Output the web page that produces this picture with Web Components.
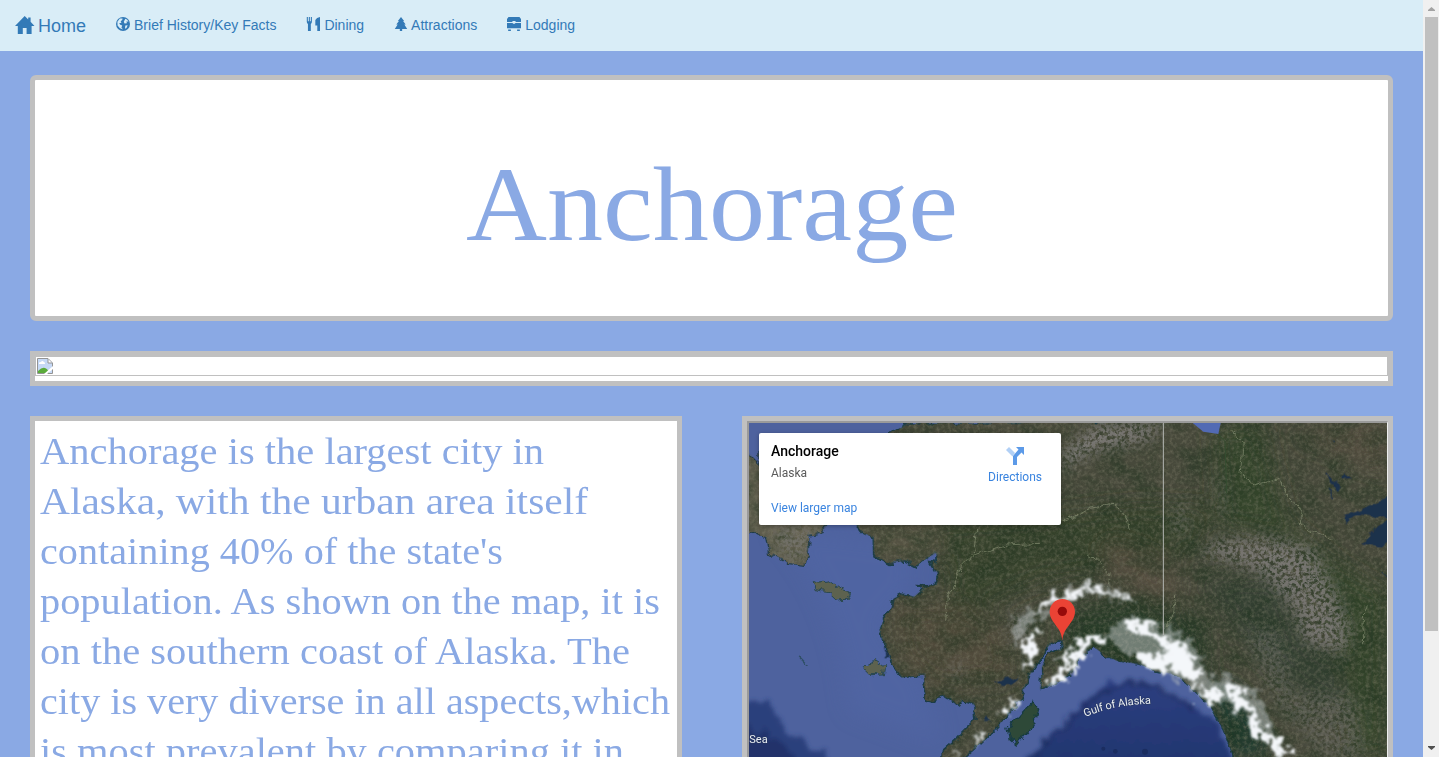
<!DOCTYPE html>
<html lang="en">
<head>
<meta charset="utf-8">
<title>Anchorage</title>
<style>
html,body{height:100%;margin:0;overflow:hidden}
body{font-family:"Liberation Sans",Arial,sans-serif;font-size:14px;background:#8aa9e4}
</style>
</head>
<body>
<city-page></city-page>

<template id="t-page">
<style>
:host{display:flex;height:757px;overflow:hidden}
main{flex:1;min-width:0;display:flex;flex-direction:column}
.content{padding:24px 30px 0;display:flex;flex-direction:column;gap:30px}
.cols{display:grid;grid-template-columns:652px 651px;gap:60px}
</style>
<main>
<site-nav>
<nav-link icon="home" brand>Home</nav-link>
<nav-link icon="globe">Brief History/Key Facts</nav-link>
<nav-link icon="cutlery">Dining</nav-link>
<nav-link icon="tree">Attractions</nav-link>
<nav-link icon="bed">Lodging</nav-link>
</site-nav>
<div class="content">
<hero-title><fit-line width="492">Anchorage</fit-line></hero-title>
<image-strip></image-strip>
<div class="cols">
<city-text>
<fit-line width="504">Anchorage is the largest city in</fit-line>
<fit-line width="548">Alaska, with the urban area itself</fit-line>
<fit-line width="463">containing 40% of the state's</fit-line>
<fit-line width="620">population. As shown on the map, it is</fit-line>
<fit-line width="590">on the southern coast of Alaska. The</fit-line>
<fit-line width="630">city is very diverse in all aspects,which</fit-line>
<fit-line width="584">is most prevalent by comparing it in</fit-line>
</city-text>
<city-map></city-map>
</div>
</div>
</main>
<page-scrollbar></page-scrollbar>
</template>

<template id="t-map">
<style>
:host{display:block;box-sizing:border-box;height:450px;border:5px solid #c0c0c0}
.frame{position:relative;height:440px;box-sizing:border-box;border:solid;border-width:2px 1px 2px 2px;border-color:#9a9a9a #eee #eee #9a9a9a;overflow:hidden;font-family:Roboto,sans-serif}
.terrain{display:block;width:638px;height:334px}
.card{position:absolute;left:10px;top:10px;width:302px;height:92px;box-sizing:border-box;background:#fff;border-radius:2px;box-shadow:0 1px 4px rgba(0,0,0,.3);padding:10px 19px 0 12px;display:flex;justify-content:space-between;font-size:12px}
.name{font-size:14px;font-weight:500;line-height:16px;color:#000}
.state{line-height:14px;margin-top:7px;color:#5b5b5b}
.more{line-height:14px;margin-top:21px;color:#3a84df}
.dir{padding-top:4px;display:flex;flex-direction:column;align-items:center;color:#3a84df;line-height:14px;gap:5px}
.dir svg{display:block}
</style>
<div class="frame">
<svg class="terrain" viewBox="27 39 1914 1002" preserveAspectRatio="none">
<defs>
<filter id="rough" x="-5%" y="-5%" width="110%" height="110%"><feTurbulence type="fractalNoise" baseFrequency=".035" numOctaves="4" seed="3"/><feDisplacementMap in="SourceGraphic" scale="26" xChannelSelector="R" yChannelSelector="G"/></filter>
<filter id="snowy" x="-20%" y="-20%" width="140%" height="140%"><feTurbulence type="fractalNoise" baseFrequency=".04" numOctaves="5" seed="11"/><feDisplacementMap in="SourceGraphic" scale="75" xChannelSelector="R" yChannelSelector="G"/><feGaussianBlur stdDeviation="2.6"/></filter>
<filter id="soft" x="-50%" y="-50%" width="200%" height="200%"><feGaussianBlur stdDeviation="32"/></filter>
<filter id="edge"><feTurbulence type="fractalNoise" baseFrequency=".03" numOctaves="4" seed="6"/><feDisplacementMap in="SourceGraphic" scale="50" xChannelSelector="R" yChannelSelector="G"/><feGaussianBlur stdDeviation="6"/></filter>
<filter id="grain" x="0" y="0" width="100%" height="100%" color-interpolation-filters="sRGB"><feTurbulence type="fractalNoise" baseFrequency=".09" numOctaves="4" seed="8" result="n"/><feColorMatrix in="n" values="0 0 0 0 .52  0 0 0 0 .51  0 0 0 0 .43  1.5 0 0 0 -.6"/><feComposite in2="SourceAlpha" operator="in"/></filter>
<filter id="shade" x="0" y="0" width="100%" height="100%" color-interpolation-filters="sRGB"><feTurbulence type="fractalNoise" baseFrequency=".012 .018" numOctaves="6" seed="21" result="n"/><feColorMatrix in="n" values="0 0 0 0 .12  0 0 0 0 .2  0 0 0 0 .12  0 2 0 0 -.75"/><feComposite in2="SourceAlpha" operator="in"/></filter>
<filter id="rock" x="-20%" y="-20%" width="140%" height="140%" color-interpolation-filters="sRGB"><feGaussianBlur in="SourceGraphic" stdDeviation="22" result="m"/><feTurbulence type="fractalNoise" baseFrequency=".09" numOctaves="4" seed="5" result="n"/><feColorMatrix in="n" values="0 0 0 0 .5  0 0 0 0 .49  0 0 0 0 .48  4 0 0 0 -1.4"/><feComposite in2="m" operator="in"/></filter>
<linearGradient id="deep" x1="0" y1="0" x2="0" y2="1"><stop offset="0" stop-color="#2c3e80"/><stop offset="1" stop-color="#21356e"/></linearGradient>
<path id="main" d="M505 39L450 72L330 150L280 250L345 340L372 371L400 383L401 432L450 460L500 452L530 468L545 455L588 430L592 458L570 455L592 490L585 525L533 524L550 535L520 560L485 552L460 565L453 595L430 630L418 665L430 695L455 755L487 803L550 795L560 870L580 876L607 853L660 888L667 868L700 880L705 930L650 985L610 1020L608 1060L675 1041L735 988L798 922L843 867L863 805L905 742L932 702L968 690L970 712L920 735L905 770L898 838L930 828L1000 790L1018 735L1060 710L1095 735L1130 752L1195 762L1248 780L1310 795L1360 835L1410 888L1450 960L1488 1060L1960 1060V20Z"/>
<clipPath id="landclip"><use href="#main"/><path d="M27 125L57 165V120H200L262 345L245 370L207 375L205 425L195 466L145 460L85 430L78 380L27 365Z"/></clipPath>
</defs>
<rect x="27" y="39" width="1914" height="1002" fill="#4e629e"/>
<path d="M100 350Q300 560 330 900L600 1000L550 800L420 650L520 540V400Z" fill="#5166a5" opacity=".6" filter="url(#soft)"/>
<g filter="url(#edge)">
<path d="M0 870L95 885L135 965L220 1015L310 1070H0Z" fill="#2b3f7c"/>
<path d="M0 950L100 975L190 1070H0Z" fill="#20326a"/>
<path d="M840 1070L960 955L1050 862L1110 815L1230 820L1310 865L1420 925L1500 1080Z" fill="url(#deep)"/>
<path d="M870 1050L970 950L1080 850L1170 820L1250 830L1360 895" fill="none" stroke="#1b2a5c" stroke-width="13" opacity=".65"/>
</g>
<g filter="url(#rough)">
<path d="M17 125L57 165V120H200L262 345L245 370L207 375L205 425L195 466L145 460L85 430L78 380L17 365Z" fill="#625e50" stroke="#233e4b" stroke-width="4"/>
<use href="#main" fill="#47493a" stroke="#1d3c46" stroke-width="5"/>
<path d="M220 514L235 520L270 515L302 538L326 545L320 568L291 570L268 548L225 542Z M370 770L406 752L434 770L430 795L397 797Z" fill="#5d624f" stroke="#29474f" stroke-width="3"/>
<path d="M801 955L838 920L880 875L893 895L884 940L832 1005L808 985Z" fill="#2d4a37" stroke="#183a42" stroke-width="4"/>
<path d="M178 737L195 755L205 765" stroke="#304f68" stroke-width="5" fill="none"/>
</g>
<g clip-path="url(#landclip)">
<g filter="url(#soft)">
<path d="M600 340L960 310L1200 280L1420 290L1380 420L1130 470L900 510L640 630Z" fill="#334229" opacity=".75"/>
<path d="M1420 60L1560 30L1640 330L1790 460L1940 550V1041H1850L1790 620L1680 400L1440 340Z" fill="#33452b" opacity=".85"/>
<path d="M450 590L640 580L780 640L820 800L600 840L490 760Z" fill="#554c3b" opacity=".7"/>
<path d="M1370 500L1620 500L1690 680L1800 740L1830 900L1680 850L1500 680Z" fill="#323e32" opacity=".85"/>
<path d="M980 600L1250 560L1390 650L1400 790L1280 790L970 770Z" fill="#2a3e2b"/>
<path d="M1400 800L1500 850L1600 1041H1470Z" fill="#1f3a2d"/>
<path d="M1100 390L1300 460L1320 600L1210 560L1090 480ZM1660 70L1940 40V190Z" fill="#574f41" opacity=".8"/>
<path d="M480 40H1000L980 80ZM350 345L590 345L600 430L440 450Z" fill="#615b4a" opacity=".6"/>
</g>
<rect x="27" y="39" width="1914" height="1002" filter="url(#shade)" opacity=".55"/>
<rect x="27" y="39" width="1914" height="1002" filter="url(#grain)" opacity=".6"/>
<g filter="url(#rock)">
<path d="M960 130L1060 50L1280 35L1230 90L1070 120L970 180Z"/>
<path d="M1420 390L1570 380L1720 410L1780 530L1830 650L1820 730L1690 700L1660 600L1560 490L1380 430Z" opacity=".85"/>
<path d="M1510 650L1620 670L1660 850L1840 850L1880 1041H1750L1600 870Z" opacity=".4"/>
<path d="M820 610L870 600L840 700L815 700ZM640 750L665 750L660 810L635 800Z" opacity=".8"/>
<path d="M1310 270L1335 270L1340 360L1300 390ZM1430 190L1445 190L1460 320L1440 320Z" opacity=".6"/>
<path d="M90 350L260 350L180 460L130 450Z" opacity=".6"/>
</g>
</g>
<g fill="#b9bfc0" opacity=".5" filter="url(#snowy)">
<path d="M820 620L880 600L940 555L1070 515L1180 560L1160 575L1050 550L940 590L865 640L840 700L815 700Z"/>
<path d="M1100 670L1160 620L1260 640L1360 700L1400 800L1470 800L1550 850L1600 950L1570 990L1500 900L1390 850L1240 770L1130 720Z"/>
</g>
<g fill="#f4f7fa" filter="url(#snowy)">
<path d="M875 615L900 580L948 560L1000 545L1050 540L1040 550L970 570L920 590Z"/>
<path d="M1030 520L1065 522L1110 545L1160 555L1175 568L1120 559L1060 540Z"/>
<path d="M870 670L890 670L895 705L870 755L850 795L845 775L865 730L840 725Z"/>
<path d="M915 830L950 785L985 765L975 800Z M1000 730L1025 680L1100 675L1108 692L1040 710L1015 785L990 780Z"/>
<path d="M1148 635L1200 630L1240 655L1270 680L1325 698L1360 745L1385 820L1350 815L1310 785L1220 775L1175 740L1240 730L1290 740L1250 690L1195 672Z"/>
<path d="M1365 830L1400 845L1430 832L1460 860L1425 858L1425 890L1380 860Z"/>
<path d="M1465 818L1505 850L1540 900L1565 955L1615 985L1660 1041H1625L1575 990L1548 985L1525 910L1475 870Z"/>
<path d="M780 900L835 865L820 900ZM640 1035L665 1020L650 1045ZM690 985L735 965L705 995Z M955 745L990 705L980 800Z"/>
</g>
<g fill="#1c304c" filter="url(#rough)">
<path d="M1815 312L1875 292L1950 260V328L1875 312L1820 334ZM1895 365L1945 330V390L1920 416L1870 400Z"/>
<path d="M1760 195L1800 230L1790 245ZM1815 195L1830 205L1810 210ZM1768 240L1778 265ZM1780 95L1790 100ZM1925 490L1940 500Z" stroke="#1c304c" stroke-width="3"/>
<path d="M763 820L800 800L835 804L806 822ZM735 915L755 930L735 930ZM432 705L445 735L436 740Z"/>
</g>
<path d="M1358 39L1390 65L1435 72L1442 39Z" fill="#526ab4"/>
<path d="M1435 72L1455 95L1460 250" stroke="#354d31" fill="none" stroke-width="3"/>
<g fill="none" stroke="#929a7d" stroke-width="2.5" opacity=".7" filter="url(#rough)">
<path d="M1478 60L1510 100L1500 190L1545 225L1620 205L1640 255L1690 300L1680 340L1720 365L1780 385"/>
<path d="M960 340L1050 295L1120 280L1155 310L1170 360M1040 425L1080 460L1110 490L1105 530M1300 555L1305 600L1280 650"/>
<path d="M710 355L700 430L660 470L625 560L620 635M700 435L800 405L900 400M1875 585L1870 700"/>
</g>
<path d="M1270 39V675" stroke="#b6b8b5" stroke-width="3"/>
<g fill="#1b2d60"><circle cx="1090" cy="1016" r="6"/><circle cx="1126" cy="1024" r="7"/><circle cx="1215" cy="1025" r="9"/></g>
<g font-family="Roboto,sans-serif" fill="#e8edf5" stroke="#28375c" stroke-width="3" paint-order="stroke">
<text x="28" y="999" font-size="33">Sea</text>
<text font-size="33" textLength="202"><textPath href="#gulf">Gulf of Alaska</textPath></text>
</g>
<path id="gulf" d="M1036 921Q1125 882 1245 881" fill="none"/>
<path d="M967 692C965 650 929 638 929 605A38 38 0 0 1 1005 605C1005 638 970 650 967 692Z" fill="#ea4335"/><circle cx="967" cy="604" r="14" fill="#960a0a"/>
</svg>
<div class="card">
<div><div class="name">Anchorage</div><div class="state">Alaska</div><div class="more">View larger map</div></div>
<div class="dir"><svg width="18" height="18" viewBox="0 0 18 18"><path d="M0 3L3 0L9 6L6.5 9.5Z" fill="#b1d0f6"/><path d="M10 0H18V8L15.5 5.5L11 10V18H7V9L12.5 2.5Z" fill="#5c9ae8"/></svg><span>Directions</span></div>
</div>
</div>
</template>

<script>
const shadow=(el,html)=>{const r=el.attachShadow({mode:'open'});if(typeof html==='string')r.innerHTML=html;else r.append(html.content.cloneNode(true));return r};
const icons={
home:'<path d="M9.7 0L13.2 3.4V1.5H15.6V5.8L19.5 10H16.6V18H11.6V12H7.8V18H2.8V10H0Z"/>',
globe:'<circle cx="9" cy="9" r="9"/><path fill="#d9edf7" d="M5 2L8.5 1.8L8 4L6 5.5L7 7.5L4 8L5.5 10L8 11L7 13.5L9 16L5 14.5L2 11L1.8 6ZM12 2.2L14.5 3.5L16 6L13.5 5.5L14 8L11 8.5L10 6ZM12 11L15 10.5L13.5 14L11.5 15Z"/>',
cutlery:'<path d="M1 0H2.4V5.5H3.6V0H5V5.5H6.2V0H7.6V6Q7.6 8 6.2 9V18H2.5V9Q1 8 1 6ZM18 0V18H14.5V11H12V4Q13.5 .5 18 0Z"/>',
tree:'<path d="M9 0L13 5H11.7L15 9.5H13.3L17 15.3H10.5V18H7.5V15.3H1L4.7 9.5H3L6.3 5H5Z"/>',
bed:'<path d="M2 0H16L18 2.5V6.3H11V5.2H7V6.3H0V2.5ZM0 7.8H7.5V8.8H10.5V7.8H18V14.5H0ZM1.5 16H5V18H1.5ZM13 16H16.5V18H13Z"/>'};
customElements.define('site-nav',class extends HTMLElement{connectedCallback(){shadow(this,'<style>:host{display:flex;height:51px;background:#d9edf7;box-sizing:border-box}</style><slot></slot>')}});
customElements.define('nav-link',class extends HTMLElement{connectedCallback(){shadow(this,`<style>:host{display:flex;align-items:flex-start;padding:15px;gap:4px;line-height:20px;color:#337ab7}:host([brand]){font-size:18px;gap:5px;line-height:23px;padding-top:15px}:host([icon=tree]){gap:3px}svg{width:14px;height:14px;margin-top:2px;fill:currentColor;overflow:visible}:host([brand]) svg{width:18px;height:18px;margin-top:1px}</style><svg viewBox="0 0 18 18">${icons[this.getAttribute('icon')]}</svg><span><slot></slot></span>`)}});
customElements.define('hero-title',class extends HTMLElement{connectedCallback(){shadow(this,'<style>:host{box-sizing:border-box;height:246px;border:5px solid #c0c0c0;border-radius:6px;background:#fff;color:#8aa9e4;display:flex;justify-content:center;padding-top:66px;font:106px/118px "Liberation Serif",serif}</style><slot></slot>')}});
customElements.define('fit-line',class extends HTMLElement{connectedCallback(){const w=+this.getAttribute('width');const r=shadow(this,`<style>:host{display:block;white-space:nowrap;width:${w}px}span{display:inline-block;transform-origin:0 50%}</style><span><slot></slot></span>`);requestAnimationFrame(()=>{const s=r.querySelector('span');s.style.transform=`scaleX(${w/s.getBoundingClientRect().width})`})}});
customElements.define('image-strip',class extends HTMLElement{connectedCallback(){shadow(this,`<style>:host{display:block;box-sizing:border-box;height:35px;border:5px solid #c0c0c0;background:#fff}div{height:20px;box-sizing:border-box;border:1px solid #c0c0c0;display:flex}svg{margin:1px 0 0 1px}</style><div><svg width="16" height="16" viewBox="0 0 16 16"><path d="M.5.5H11L15.5 5V15.5H.5Z" fill="#c6d9f6" stroke="#949494"/><path d="M11 1V5H15" fill="#fff" stroke="#949494"/><path d="M2 5Q2 4 4 4Q5 2 7 4Q8 4 8 6H2Z" fill="#fff"/><path d="M1 15V13Q5 9 8 10Q11 11 12 15Z" fill="#5aab3a"/><path d="M7 16L16 8V11L10 16Z" fill="#fff"/></svg></div>`)}});
customElements.define('city-text',class extends HTMLElement{connectedCallback(){shadow(this,'<style>:host{display:block;box-sizing:border-box;height:450px;border:5px solid #c0c0c0;background:#fff;padding:6px 5px;color:#8aa9e4;font:37.5px/50px "Liberation Serif",serif}</style><slot></slot>')}});
customElements.define('page-scrollbar',class extends HTMLElement{connectedCallback(){shadow(this,'<style>:host{width:16px;box-sizing:border-box;background:#f0f0f0;display:flex;flex-direction:column;align-items:center}svg{display:block}.thumb{width:13px;height:614px;background:#c0c0c0;margin-left:1px}.down{margin-top:auto}</style><svg width="16" height="17"><path d="M5 11V10L8.5 7L12 10V11Z" fill="#a3a3a3"/></svg><div class="thumb"></div><svg class="down" width="16" height="17"><path d="M5 6H12V7L8.5 10L5 7Z" fill="#505050"/></svg>')}});
customElements.define('city-map',class extends HTMLElement{connectedCallback(){shadow(this,document.getElementById('t-map'))}});
customElements.define('city-page',class extends HTMLElement{connectedCallback(){shadow(this,document.getElementById('t-page'))}});
</script>
</body>
</html>
